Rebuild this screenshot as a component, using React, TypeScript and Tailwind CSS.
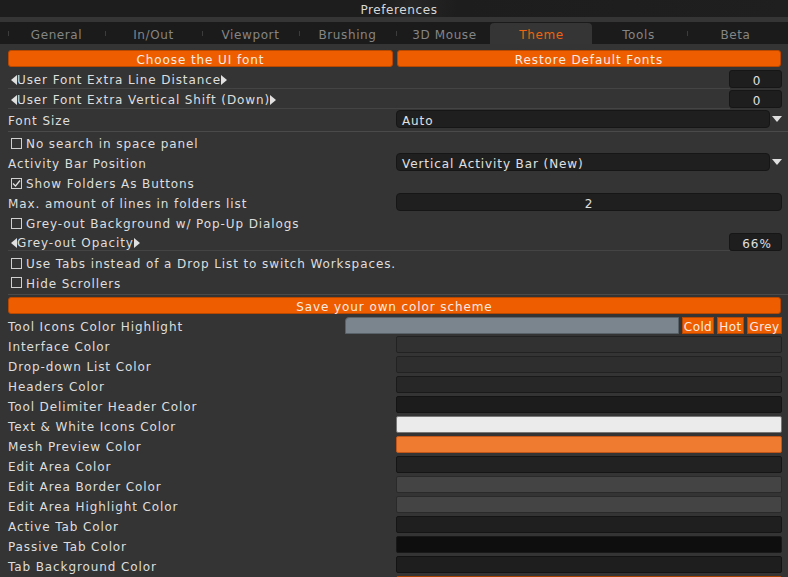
import React from "react";

const tabs = ["General", "In/Out", "Viewport", "Brushing", "3D Mouse", "Theme", "Tools", "Beta"];

const colorRows: ReadonlyArray<{ label: string; color: string; border: string }> = [
  { label: "Interface Color", color: "bg-[#313131]", border: "border-[#222]" },
  { label: "Drop-down List Color", color: "bg-[#2e2e2e]", border: "border-[#222]" },
  { label: "Headers Color", color: "bg-[#272727]", border: "border-[#1a1a1a]" },
  { label: "Tool Delimiter Header Color", color: "bg-[#1c1c1c]", border: "border-[#141414]" },
  { label: "Text & White Icons Color", color: "bg-[#ebebeb]", border: "border-[#777]" },
  { label: "Mesh Preview Color", color: "bg-[#ef7b30]", border: "border-[#c0561a]" },
  { label: "Edit Area Color", color: "bg-[#222222]", border: "border-[#151515]" },
  { label: "Edit Area Border Color", color: "bg-[#444444]", border: "border-[#2a2a2a]" },
  { label: "Edit Area Highlight Color", color: "bg-[#444444]", border: "border-[#2a2a2a]" },
  { label: "Active Tab Color", color: "bg-[#1f1f1f]", border: "border-[#151515]" },
  { label: "Passive Tab Color", color: "bg-[#0e0e0e]", border: "border-[#181818]" },
  { label: "Tab Background Color", color: "bg-[#1e1e1e]", border: "border-[#131313]" },
  // only the top edge of this one is in view
  { label: "", color: "bg-[#ee5d00]", border: "border-[#a84200]" },
];

function Txt({ children }: { children: React.ReactNode }) {
  return <span className="relative top-[1.5px] whitespace-nowrap">{children}</span>;
}

function Arrow({ dir }: { dir: "left" | "right" }) {
  return (
    <svg width="6" height="10" viewBox="0 0 6 10" className="shrink-0 relative top-[1px]">
      {dir === "left" ? <path d="M6 0 L0 5 L6 10 Z" fill="#e0e0e0" /> : <path d="M0 0 L6 5 L0 10 Z" fill="#e0e0e0" />}
    </svg>
  );
}

function Check({ checked = false }: { checked?: boolean }) {
  return (
    <span className="w-[11px] h-[11px] border border-[#d0d0d0] shrink-0 flex items-center justify-center mr-[4px] relative top-[1px]">
      {checked && (
        <svg width="9" height="9" viewBox="0 0 9 9">
          <path d="M1 4.5 L3.5 7 L8 1.5" stroke="#e0e0e0" strokeWidth="1.2" fill="none" />
        </svg>
      )}
    </span>
  );
}

function OrangeButton({ children, className = "" }: { children: React.ReactNode; className?: string }) {
  return (
    <div
      className={
        "h-[17px] flex items-center justify-center rounded-[3px] bg-[#ee5d00] border border-[#b84800] text-[#f7ebe2] " +
        className
      }
    >
      <Txt>{children}</Txt>
    </div>
  );
}

function Dropdown({ value }: { value: string }) {
  return (
    <div className="flex items-center w-[386px]">
      <div className="h-[18px] w-[374px] rounded-[4px] bg-[#1f1f1f] border border-[#161616] flex items-center px-[5px] text-[#e0e0e0]">
        <Txt>{value}</Txt>
      </div>
      <svg width="10" height="6" viewBox="0 0 10 6" className="ml-[2px]">
        <path d="M0 0 L10 0 L5 6 Z" fill="#e0e0e0" />
      </svg>
    </div>
  );
}

function ValueBox({ value }: { value: string }) {
  return (
    <div className="h-[18px] w-[53px] rounded-[3px] bg-[#1e1e1e] border border-[#161616] flex items-center justify-center pl-[3px] text-[#e0e0e0]">
      <Txt>{value}</Txt>
    </div>
  );
}

export default function App() {
  return (
    <div className="w-[788px] h-[577px] overflow-hidden bg-[#343434] text-[#dedede] text-[12px] tracking-[0.9px] font-['DejaVu_Sans',sans-serif] leading-none">
      {/* title */}
      <div className="h-[17px] pl-[10px] bg-[linear-gradient(100deg,#1d1d1d_0%,#1d1d1d_48%,#262626_52%,#1d1d1d_58%,#1f1f1f_100%)] flex items-center justify-center text-[#d8d8d8] tracking-[0.6px]">
        <Txt>Preferences</Txt>
      </div>
      <div className="h-[5px] bg-[#353535]" />
      {/* tabs */}
      <div className="h-[22px] bg-[#1b1b1b] flex items-end pl-[8px] tracking-[0.6px]">
        {tabs.map((t, i) => {
          const active = t === "Theme";
          return (
            <div key={t} className="relative w-[97px] h-[21px] flex items-center justify-center">
              {active ? (
                <div className="absolute -left-[3px] -right-[2px] top-0 bottom-0 bg-[#353535] rounded-t-[4px]" />
              ) : null}
              {(i === 0 || (tabs[i - 1] !== "Theme" && !active)) && (
                <span className="absolute left-0 top-[8px] w-px h-[5px] bg-[#3c3c3c]" />
              )}
              <span className={"relative top-[1px] " + (active ? "text-[#ee6411]" : "text-[#858585]")}>{t}</span>
            </div>
          );
        })}
      </div>

      {/* content */}
      <div className="pl-[8px] pr-[6px] pt-[6px] flex flex-col">
        <div className="flex gap-[4px] pr-[1px]">
          <OrangeButton className="w-[385px]">Choose the UI font</OrangeButton>
          <OrangeButton className="flex-1">Restore Default Fonts</OrangeButton>
        </div>

        <div className="h-[2px]" />
        {/* slider rows */}
        <div className="h-[20px] flex items-center">
          <div className="flex-1 h-full flex items-center border-b border-[#444] pl-[3px] -mr-px">
            <Arrow dir="left" />
            <Txt>User Font Extra Line Distance</Txt>
            <Arrow dir="right" />
          </div>
          <ValueBox value="0" />
        </div>
        <div className="h-[20px] flex items-center">
          <div className="flex-1 h-full flex items-center border-b border-[#444] pl-[3px] -mr-px">
            <Arrow dir="left" />
            <Txt>User Font Extra Vertical Shift (Down)</Txt>
            <Arrow dir="right" />
          </div>
          <ValueBox value="0" />
        </div>

        <div className="h-[23px] flex items-start pt-[1px] border-b border-[#4a4a4a] -mr-[6px]">
          <div className="flex-1 h-[18px] flex items-center">
            <Txt>Font Size</Txt>
          </div>
          <div className="w-[392px]">
            <Dropdown value="Auto" />
          </div>
        </div>

        <div className="h-[20px] flex items-center pl-[3px]">
          <Check />
          <Txt>No search in space panel</Txt>
        </div>
        <div className="h-[20px] flex items-center">
          <div className="flex-1">
            <Txt>Activity Bar Position</Txt>
          </div>
          <div className="w-[392px] -mr-[6px]">
            <Dropdown value="Vertical Activity Bar (New)" />
          </div>
        </div>
        <div className="h-[20px] flex items-center pl-[3px]">
          <Check checked />
          <Txt>Show Folders As Buttons</Txt>
        </div>
        <div className="h-[20px] flex items-center">
          <div className="flex-1">
            <Txt>Max. amount of lines in folders list</Txt>
          </div>
          <div className="w-[386px] h-[18px] rounded-[4px] bg-[#1f1f1f] border border-[#161616] flex items-center justify-center text-[#e0e0e0]">
            <Txt>2</Txt>
          </div>
        </div>
        <div className="h-[20px] flex items-center pl-[3px]">
          <Check />
          <Txt>Grey-out Background w/ Pop-Up Dialogs</Txt>
        </div>
        <div className="h-[20px] flex items-center">
          <div className="flex-1 h-[18px] flex items-center border-b border-[#444] pl-[3px] -mr-px">
            <Arrow dir="left" />
            <Txt>Grey-out Opacity</Txt>
            <Arrow dir="right" />
          </div>
          <ValueBox value="66%" />
        </div>
        <div className="h-[20px] flex items-center pl-[3px]">
          <Check />
          <Txt>Use Tabs instead of a Drop List to switch Workspaces.</Txt>
        </div>
        <div className="h-[23px] flex items-start pt-[4px] pl-[3px] border-b border-[#4a4a4a] -mr-[6px]">
          <Check />
          <Txt>Hide Scrollers</Txt>
        </div>
        <div className="h-[2px]" />

        <OrangeButton className="mr-px">Save your own color scheme</OrangeButton>

        <div className="h-[1px]" />
        <div className="h-[20px] flex items-center">
          <div className="flex-1">
            <Txt>Tool Icons Color Highlight</Txt>
          </div>
          <div className="flex items-center gap-[3px] h-[18px] text-[#f7ebe2] tracking-[0.4px]">
            <div className="w-[334px] h-[17px] bg-[#7b858e] border border-[#5a6269] rounded-tl-[4px]" />
            <div className="h-[17px] w-[32px] bg-[#ee5d00] border border-[#b84800] flex items-center justify-center">
              <Txt>Cold</Txt>
            </div>
            <div className="h-[17px] w-[27px] bg-[#ee5d00] border border-[#b84800] flex items-center justify-center">
              <Txt>Hot</Txt>
            </div>
            <div className="h-[17px] w-[35px] bg-[#ee5d00] border border-[#b84800] flex items-center justify-center">
              <Txt>Grey</Txt>
            </div>
          </div>
        </div>

        {colorRows.map((r, i) => (
          <div key={i} className="h-[20px] flex items-start">
            <div className="flex-1 h-[20px] flex items-center">{r.label && <Txt>{r.label}</Txt>}</div>
            <div className={"w-[386px] h-[17px] mt-[1px] rounded-[2px] border " + r.color + " " + r.border} />
          </div>
        ))}
      </div>
    </div>
  );
}
